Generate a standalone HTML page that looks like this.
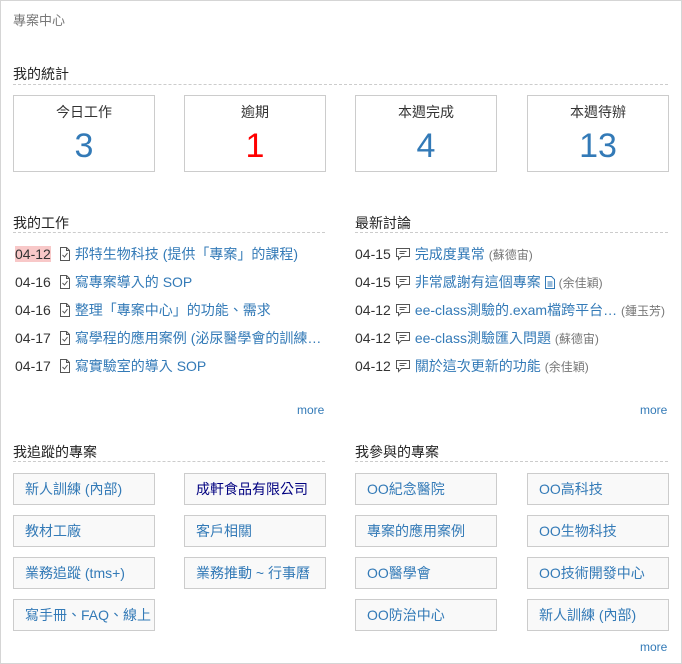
<!DOCTYPE html>
<html><head><meta charset="utf-8"><style>
*{margin:0;padding:0;box-sizing:border-box}
body{width:682px;height:664px;background:#fff;font-family:"Liberation Sans","Noto Sans CJK TC",sans-serif;font-size:14px;color:#333;position:relative;overflow:hidden}
.frame{position:absolute;left:0;top:0;width:682px;height:664px;border:1px solid #d5d5d5}
.a{position:absolute;white-space:nowrap}
.h{font-size:14px;color:#222}
.line{position:absolute;height:0;border-top:1px dashed #ccc}
.stat{position:absolute;top:95px;width:142px;height:77px;border:1px solid #ccc;text-align:center}
.stat .t{margin-top:8px;font-size:14px;color:#333;line-height:17px}
.stat .n{font-size:34px;line-height:40px;margin-top:5px;color:#337ab7}
.row{position:absolute;white-space:nowrap;line-height:20px}
.row .d{color:#333}
.l{color:#337ab7}
.g{color:#777;font-size:12px}
.ic{display:inline-block;vertical-align:-2px;margin:0 4px 0 8px}
.ic2{display:inline-block;vertical-align:-2px;margin:0 5px 0 5px}
.more{position:absolute;color:#337ab7;font-size:12px}
.btn{position:absolute;width:142px;height:32px;border:1px solid #ccc;background:#f9f9f9;color:#337ab7;line-height:30px;padding-left:11px;white-space:nowrap;overflow:hidden}
</style></head><body>
<div class="frame"></div>
<div class="a" style="left:13px;top:10px;color:#777;font-size:13px">專案中心</div>

<div class="a h" style="left:13px;top:64px">我的統計</div>
<div class="line" style="left:13px;top:84px;width:655px"></div>
<div class="stat" style="left:13px"><div class="t">今日工作</div><div class="n">3</div></div>
<div class="stat" style="left:184px"><div class="t">逾期</div><div class="n" style="color:#f00">1</div></div>
<div class="stat" style="left:355px"><div class="t">本週完成</div><div class="n">4</div></div>
<div class="stat" style="left:527px"><div class="t">本週待辦</div><div class="n">13</div></div>

<div class="a h" style="left:13px;top:213px">我的工作</div>
<div class="line" style="left:13px;top:232px;width:312px"></div>
<div class="a h" style="left:355px;top:213px">最新討論</div>
<div class="line" style="left:355px;top:232px;width:313px"></div>

<svg width="0" height="0" style="position:absolute"><defs>
<symbol id="doc" viewBox="0 0 12 14"><path d="M1.5 0.5h6l3 3v10h-9z M7.5 0.5v3h3" fill="none" stroke="#555" stroke-width="1"/><path d="M3.5 8l2 2 3-4" fill="none" stroke="#555" stroke-width="1"/></symbol>
<symbol id="cm" viewBox="0 0 14 14"><path d="M0.5 1.5h13v8h-8l-3 3v-3h-2z" fill="none" stroke="#555" stroke-width="1"/><path d="M3.5 4.5h7M3.5 6.5h5" stroke="#555" stroke-width="1"/></symbol>
</defs></svg>

<div class="row" style="left:15px;top:244px"><span class="d" style="background:#f8c8c8">04-12</span><svg class="ic" width="12" height="14"><use href="#doc"/></svg><span class="l">邦特生物科技 (提供「專案」的課程)</span></div>
<div class="row" style="left:15px;top:272px"><span class="d">04-16</span><svg class="ic" width="12" height="14"><use href="#doc"/></svg><span class="l">寫專案導入的 SOP</span></div>
<div class="row" style="left:15px;top:300px"><span class="d">04-16</span><svg class="ic" width="12" height="14"><use href="#doc"/></svg><span class="l">整理「專案中心」的功能、需求</span></div>
<div class="row" style="left:15px;top:328px"><span class="d">04-17</span><svg class="ic" width="12" height="14"><use href="#doc"/></svg><span class="l">寫學程的應用案例 (泌尿醫學會的訓練…</span></div>
<div class="row" style="left:15px;top:356px"><span class="d">04-17</span><svg class="ic" width="12" height="14"><use href="#doc"/></svg><span class="l">寫實驗室的導入 SOP</span></div>

<div class="row" style="left:355px;top:244px"><span class="d">04-15</span><svg class="ic2" width="14" height="14"><use href="#cm"/></svg><span class="l">完成度異常</span> <span class="g">(蘇德宙)</span></div>
<div class="row" style="left:355px;top:272px"><span class="d">04-15</span><svg class="ic2" width="14" height="14"><use href="#cm"/></svg><span class="l">非常感謝有這個專案</span> <svg width="10" height="13" style="vertical-align:-2px"><path d="M0.5 0.5h6l3 3v9h-9z M2.5 6h5M2.5 8h5M2.5 10h5" fill="none" stroke="#337ab7"/></svg> <span class="g">(余佳穎)</span></div>
<div class="row" style="left:355px;top:300px"><span class="d">04-12</span><svg class="ic2" width="14" height="14"><use href="#cm"/></svg><span class="l">ee-class測驗的.exam檔跨平台…</span> <span class="g">(鍾玉芳)</span></div>
<div class="row" style="left:355px;top:328px"><span class="d">04-12</span><svg class="ic2" width="14" height="14"><use href="#cm"/></svg><span class="l">ee-class測驗匯入問題</span> <span class="g">(蘇德宙)</span></div>
<div class="row" style="left:355px;top:356px"><span class="d">04-12</span><svg class="ic2" width="14" height="14"><use href="#cm"/></svg><span class="l">關於這次更新的功能</span> <span class="g">(余佳穎)</span></div>

<div class="more" style="left:297px;top:403px">more</div>
<div class="more" style="left:640px;top:403px">more</div>

<div class="a h" style="left:13px;top:442px">我追蹤的專案</div>
<div class="line" style="left:13px;top:461px;width:312px"></div>
<div class="a h" style="left:355px;top:442px">我參與的專案</div>
<div class="line" style="left:355px;top:461px;width:313px"></div>

<div class="btn" style="left:13px;top:473px">新人訓練 (內部)</div>
<div class="btn" style="left:184px;top:473px;color:#000080">成軒食品有限公司</div>
<div class="btn" style="left:13px;top:515px">教材工廠</div>
<div class="btn" style="left:184px;top:515px">客戶相關</div>
<div class="btn" style="left:13px;top:557px">業務追蹤 (tms+)</div>
<div class="btn" style="left:184px;top:557px">業務推動 ~ 行事曆</div>
<div class="btn" style="left:13px;top:599px">寫手冊、FAQ、線上</div>

<div class="btn" style="left:355px;top:473px">OO紀念醫院</div>
<div class="btn" style="left:527px;top:473px">OO高科技</div>
<div class="btn" style="left:355px;top:515px">專案的應用案例</div>
<div class="btn" style="left:527px;top:515px">OO生物科技</div>
<div class="btn" style="left:355px;top:557px">OO醫學會</div>
<div class="btn" style="left:527px;top:557px">OO技術開發中心</div>
<div class="btn" style="left:355px;top:599px">OO防治中心</div>
<div class="btn" style="left:527px;top:599px">新人訓練 (內部)</div>

<div class="more" style="left:640px;top:640px">more</div>
</body></html>
